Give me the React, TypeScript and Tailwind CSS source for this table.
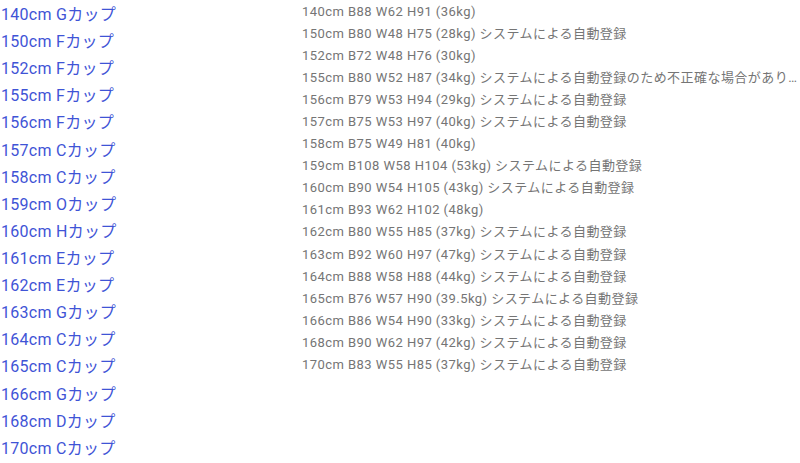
import React from "react";

const left = [
  "140cm Gカップ","150cm Fカップ","152cm Fカップ","155cm Fカップ","156cm Fカップ","157cm Cカップ","158cm Cカップ","159cm Oカップ","160cm Hカップ","161cm Eカップ","162cm Eカップ","163cm Gカップ","164cm Cカップ","165cm Cカップ","166cm Gカップ","168cm Dカップ","170cm Cカップ",
];
const right = [
  "140cm B88 W62 H91 (36kg)",
  "150cm B80 W48 H75 (28kg) システムによる自動登録",
  "152cm B72 W48 H76 (30kg)",
  "155cm B80 W52 H87 (34kg) システムによる自動登録のため不正確な場合があります",
  "156cm B79 W53 H94 (29kg) システムによる自動登録",
  "157cm B75 W53 H97 (40kg) システムによる自動登録",
  "158cm B75 W49 H81 (40kg)",
  "159cm B108 W58 H104 (53kg) システムによる自動登録",
  "160cm B90 W54 H105 (43kg) システムによる自動登録",
  "161cm B93 W62 H102 (48kg)",
  "162cm B80 W55 H85 (37kg) システムによる自動登録",
  "163cm B92 W60 H97 (47kg) システムによる自動登録",
  "164cm B88 W58 H88 (44kg) システムによる自動登録",
  "165cm B76 W57 H90 (39.5kg) システムによる自動登録",
  "166cm B86 W54 H90 (33kg) システムによる自動登録",
  "168cm B90 W62 H97 (42kg) システムによる自動登録",
  "170cm B83 W55 H85 (37kg) システムによる自動登録",
];

export default function App() {
  return (
    <div
      className="flex w-[800px] h-[463px] bg-white overflow-hidden"
      style={{ fontFamily: 'Roboto, "Noto Sans CJK JP", sans-serif' }}
    >
      <div className="w-[302px] shrink-0 flex flex-col pl-[1px] pt-[1px]">
        {left.map((t) => (
          <div key={t} className="h-[27.12px] leading-[27.12px] text-[16px] tracking-[0.28px] text-[#3f54d6] whitespace-nowrap">
            {t}
          </div>
        ))}
      </div>
      <div className="flex-1 min-w-0 flex flex-col pr-[2px] pt-[1px]">
        {right.map((t) => (
          <div key={t} className="h-[22.06px] leading-[22.06px] text-[13px] tracking-[0.45px] text-[#757575] whitespace-nowrap overflow-hidden text-ellipsis">
            {t}
          </div>
        ))}
      </div>
    </div>
  );
}
